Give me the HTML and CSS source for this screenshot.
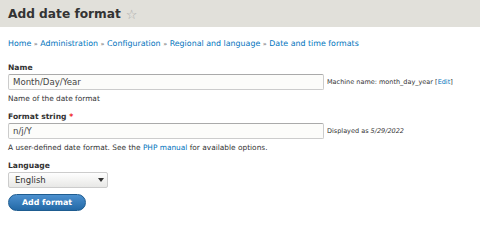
FILE: index.html
```html
<!DOCTYPE html>
<html>
<head>
<meta charset="utf-8">
<link rel="stylesheet" href="styles.css">
</head>
<body>
<header class="page-header">
  <h1 class="title">Add date format <span class="star">☆</span></h1>
</header>
<main class="content">
  <nav class="breadcrumb">
    <a href="#">Home</a> <span class="sep">»</span> <a href="#">Administration</a> <span class="sep">»</span> <a href="#">Configuration</a> <span class="sep">»</span> <a href="#">Regional and language</a> <span class="sep">»</span> <a href="#">Date and time formats</a>
  </nav>
  <form class="form">
    <div class="item">
      <label class="label">Name</label>
      <div class="row">
        <input class="text" type="text" value="Month/Day/Year">
        <span class="suffix">Machine name: month_day_year <span class="edit">[<a href="#">Edit</a>]</span></span>
      </div>
      <div class="desc">Name of the date format</div>
    </div>
    <div class="item">
      <label class="label">Format string <span class="req">*</span></label>
      <div class="row">
        <input class="text" type="text" value="n/j/Y">
        <span class="suffix">Displayed as <em>5/29/2022</em></span>
      </div>
      <div class="desc">A user-defined date format. See the <a href="#">PHP manual</a> for available options.</div>
    </div>
    <div class="item">
      <label class="label">Language</label>
      <div class="select">
        <span>English</span>
        <svg class="arrow" width="6" height="4" viewBox="0 0 6 4"><path d="M0 0H6L3 4Z" fill="#333"/></svg>
      </div>
    </div>
    <div class="actions">
      <button class="button" type="button">Add format</button>
    </div>
  </form>
</main>
</body>
</html>
```
FILE: styles.css
```css
html, body {
  margin: 0;
  padding: 0;
  background: #fff;
}
body {
  font-family: "DejaVu Sans", "Liberation Sans", sans-serif;
  font-size: 8px;
  color: #333;
}
a {
  color: #0074bd;
  text-decoration: none;
}
.page-header {
  background: #e1e0da;
  height: 27px;
  padding: 0 8px;
  display: flex;
  align-items: center;
}
.title {
  margin: 0;
  font-size: 12.2px;
  font-weight: bold;
  color: #333;
  display: flex;
  align-items: center;
  gap: 5px;
  padding-top: 1px;
}
.star {
  font-weight: normal;
  color: #aaa;
  font-size: 13px;
}
.content {
  padding: 0 8px;
}
.breadcrumb {
  margin-top: 11px;
  font-size: 7.9px;
  line-height: 12px;
}
.breadcrumb .sep {
  color: #666;
  font-size: 6.5px;
}
.form {
  margin-top: 12px;
}
.item {
  margin-bottom: 7px;
}
.label {
  display: block;
  font-weight: bold;
  font-size: 7.6px;
  line-height: 11px;
  margin-bottom: 1px;
}
.req {
  color: #e00;
}
.row {
  display: flex;
  align-items: center;
  gap: 3px;
}
.text {
  box-sizing: border-box;
  width: 316px;
  height: 16px;
  border: 1px solid #ccc;
  border-top-color: #aaa;
  border-radius: 2px;
  padding: 0 4px;
  font-family: inherit;
  font-size: 8.6px;
  color: #444;
  background: #fcfcfa;
  margin: 0;
}
.suffix {
  font-size: 6.5px;
}
.suffix em {
  font-style: italic;
}
.desc {
  margin-top: 4px;
  font-size: 7.4px;
  line-height: 10px;
}
.select {
  box-sizing: border-box;
  width: 100px;
  height: 16px;
  border: 1px solid #ccc;
  border-radius: 2px;
  background: linear-gradient(#fefefe, #e8e8e6);
  display: flex;
  align-items: center;
  justify-content: space-between;
  padding: 0 3px 0 6px;
  font-size: 8.5px;
  color: #333;
}
.actions {
  margin-top: -1px;
}
.button {
  width: 78px;
  height: 17px;
  border: 1px solid #1e5c90;
  border-radius: 10px;
  background: linear-gradient(#4c90cf, #2369a6);
  color: #fff;
  font-family: inherit;
  font-weight: bold;
  font-size: 7.9px;
  padding: 0;
}
```
